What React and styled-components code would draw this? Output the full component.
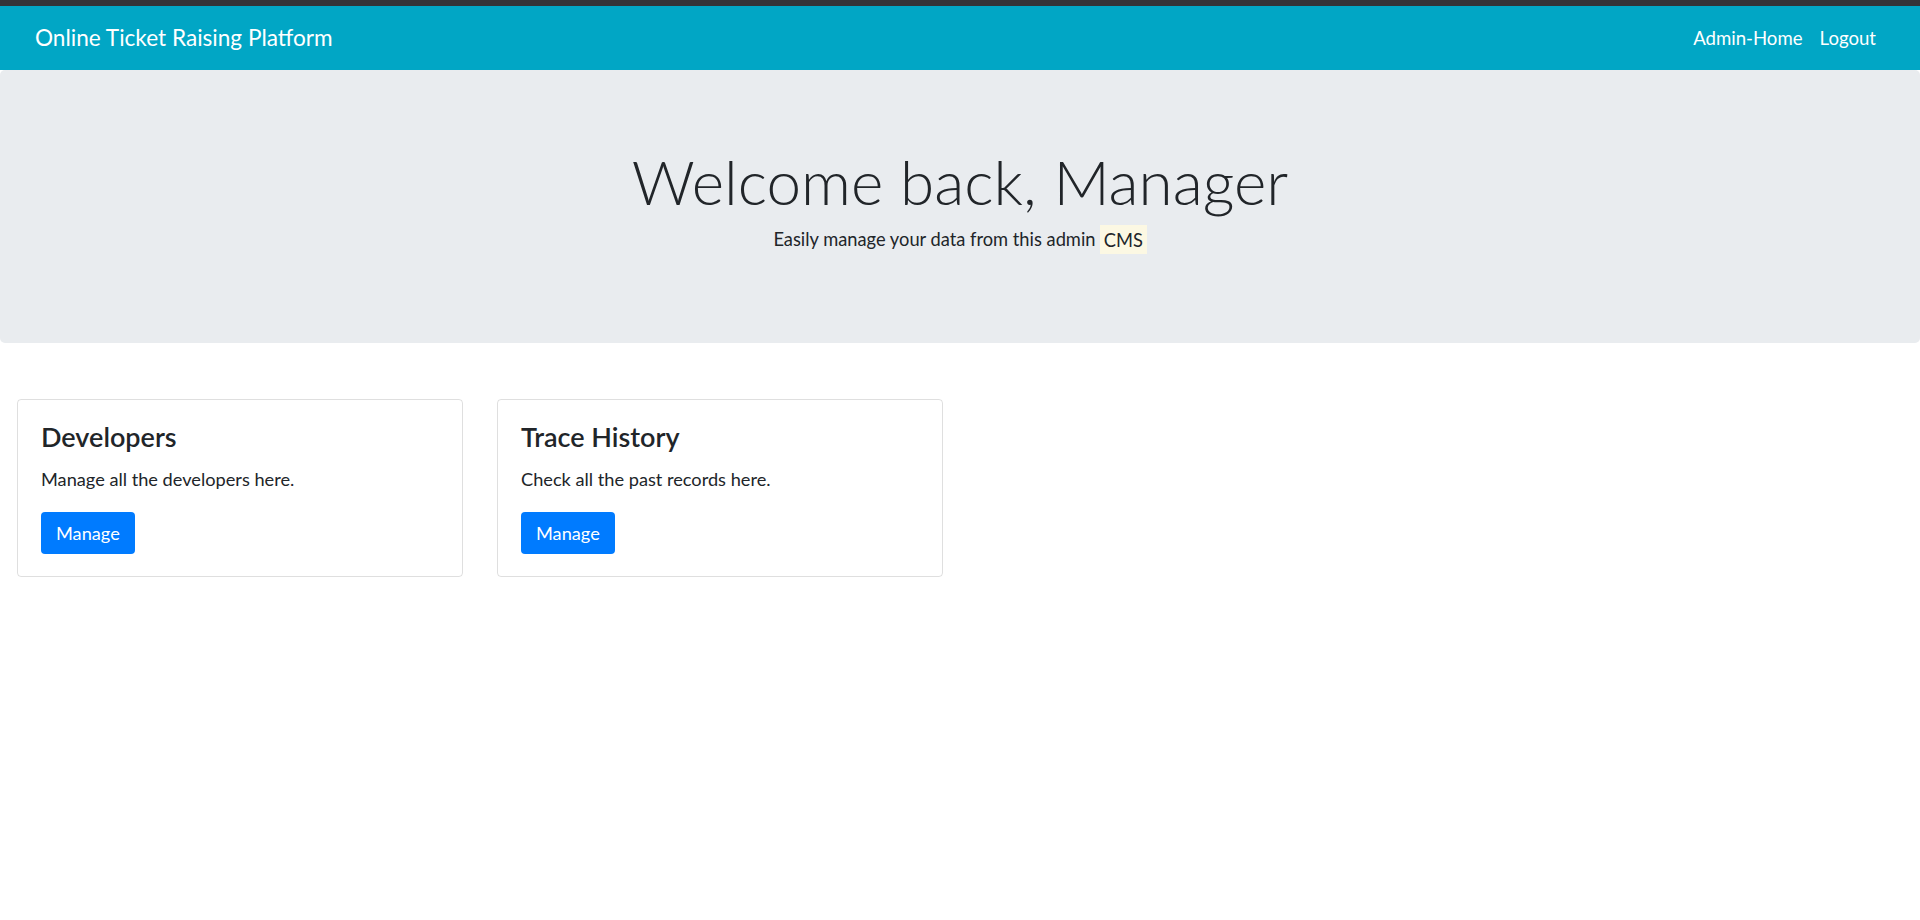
import React from 'react';
import styled, { createGlobalStyle } from 'styled-components';

const GlobalStyle = createGlobalStyle`
  * {
    box-sizing: border-box;
  }
  body {
    margin: 0;
    background: #fff;
    color: #212529;
    font-family: Lato, "Noto Sans", sans-serif;
  }
`;

const cards = [
  { title: 'Developers', text: 'Manage all the developers here.' },
  { title: 'Trace History', text: 'Check all the past records here.' },
];

export default function App() {
  return (
    <>
      <GlobalStyle />
      <TopStrip />
      <Navbar>
        <Brand href="#">Online Ticket Raising Platform</Brand>
        <NavLinks>
          <NavLink href="#">Admin-Home</NavLink>
          <NavLink href="#">Logout</NavLink>
        </NavLinks>
      </Navbar>
      <Jumbotron>
        <Headline>Welcome back, Manager</Headline>
        <Lead>
          Easily manage your data from this admin <Mark>CMS</Mark>
        </Lead>
      </Jumbotron>
      <CardRow>
        {cards.map((c) => (
          <Card key={c.title}>
            <CardTitle>{c.title}</CardTitle>
            <CardText>{c.text}</CardText>
            <Button>Manage</Button>
          </Card>
        ))}
      </CardRow>
    </>
  );
}

const TopStrip = styled.div`
  height: 6px;
  background: #343438;
`;

const Navbar = styled.nav`
  height: 64px;
  background: #01a6c5;
  display: flex;
  align-items: center;
  justify-content: space-between;
  padding: 0 44px 0 35px;
`;

const Brand = styled.a`
  color: #fff;
  text-decoration: none;
  font-size: 22.6px;
  line-height: 1.5;
`;

const NavLinks = styled.div`
  display: flex;
  gap: 17px;
  padding-top: 2px;
`;

const NavLink = styled.a`
  color: #fff;
  text-decoration: none;
  font-size: 18.6px;
  line-height: 1.5;
`;

const Jumbotron = styled.header`
  height: 273px;
  padding-top: 74px;
  background: #e9ecef;
  border-radius: 5px;
  text-align: center;
`;

const Headline = styled.h1`
  margin: 0 0 8px;
  font-size: 62px;
  font-weight: 300;
  line-height: 1.2;
  color: #212529;
`;

const Lead = styled.p`
  margin: 0;
  font-size: 18.3px;
  line-height: 1.5;
`;

const Mark = styled.mark`
  background: #fcf8e3;
  color: #212529;
  padding: 0.2em;
`;

const CardRow = styled.section`
  display: flex;
  gap: 34px;
  padding: 56px 17px 0;
`;

const Card = styled.div`
  width: 446px;
  border: 1px solid rgba(0, 0, 0, 0.125);
  border-radius: 4px;
  padding: 21px 23px 22px;
`;

const CardTitle = styled.h5`
  margin: 0 0 13px;
  font-size: 27px;
  font-weight: 600;
  line-height: 1.2;
`;

const CardText = styled.p`
  margin: 0 0 18px;
  font-size: 18.2px;
  line-height: 1.5;
`;

const Button = styled.button`
  height: 42px;
  padding: 0 15px;
  border: none;
  border-radius: 4px;
  background: #007bff;
  color: #fff;
  font-family: inherit;
  font-size: 18.2px;
  cursor: pointer;
`;
